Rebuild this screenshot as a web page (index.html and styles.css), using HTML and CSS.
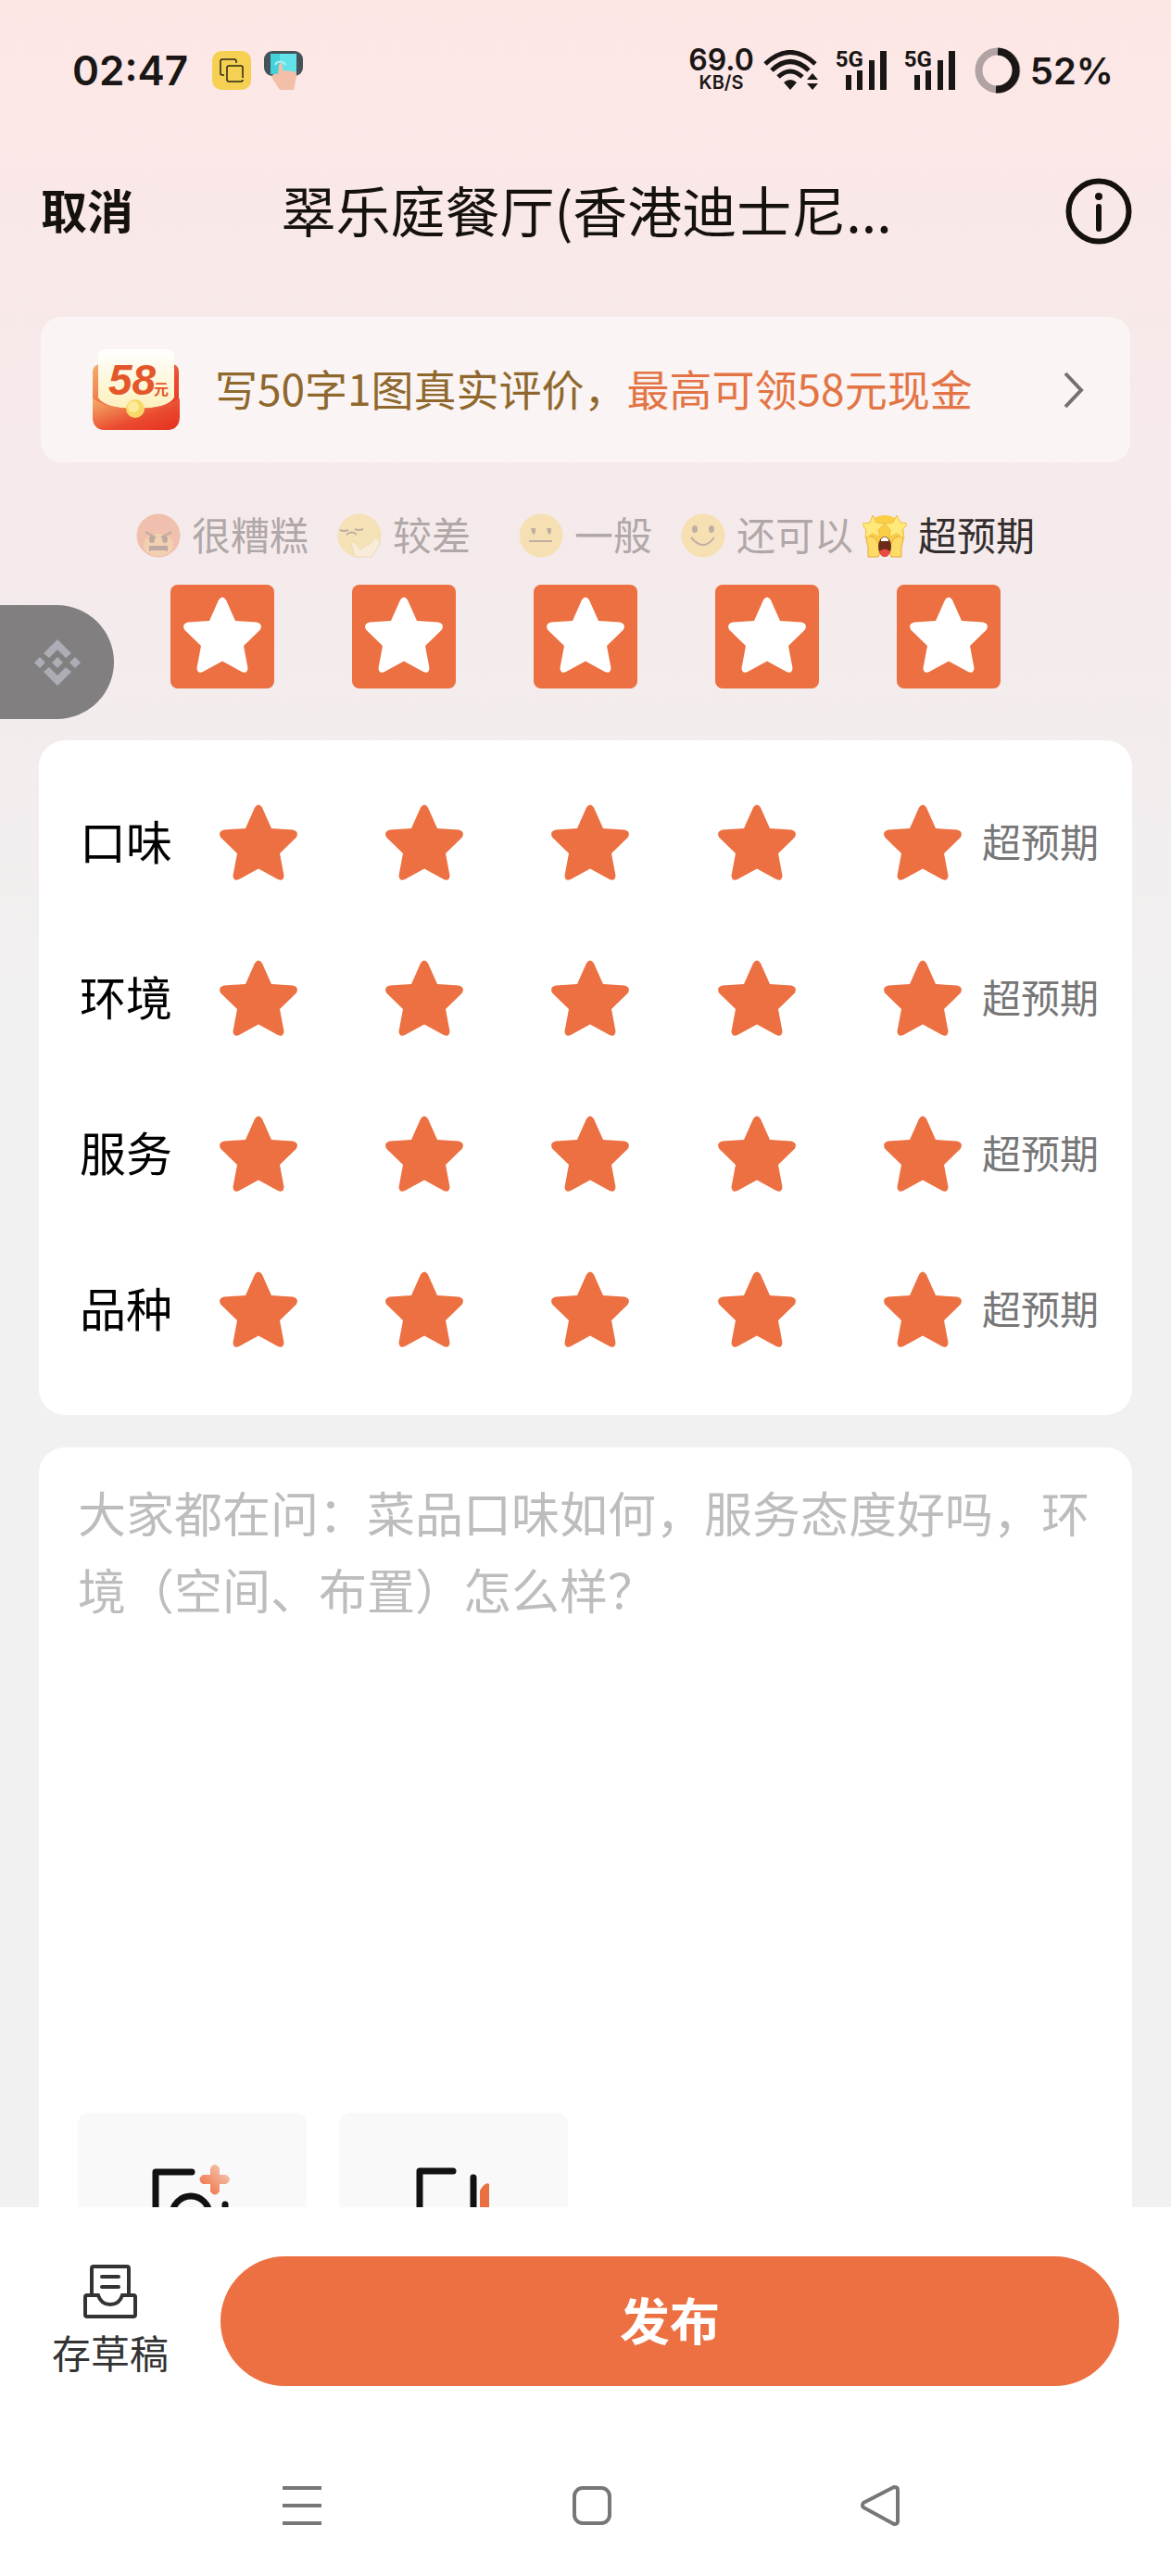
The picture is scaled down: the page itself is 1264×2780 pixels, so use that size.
FILE: index.html
```html
<!DOCTYPE html>
<html lang="zh-CN">
<head>
    <meta charset="UTF-8">
    <meta name="viewport" content="width=device-width, initial-scale=1.0">
    <title>写评价</title>
    <link rel="stylesheet" href="styles.css">
</head>
<body>
    <!-- Shared star shape -->
    <svg class="defs" aria-hidden="true">
        <symbol id="star" viewBox="0 0 84 82">
            <path d="M38 3.500Q42-2.500 46 3.500L56 26L79 27.500Q86 29 83 35.500L65 53L69.500 77Q69 83.500 63 81L42 69.500L21 81Q15 83.500 14.500 77L19 53L1 35.500Q-2 29 5 27.500L28 26Z"/>
        </symbol>
    </svg>

    <div class="status-bar">
        <div class="status-left">
            <span class="clock">02:47</span>
            <svg class="status-app" viewBox="0 0 42 42">
                <rect width="42" height="42" rx="10" fill="#f5d052"/>
                <g fill="none" stroke="#2a2412" stroke-width="1.500">
                    <path d="M13 26h-2q-2 0-2-2V11q0-2 2-2h13q2 0 2 2v2"/>
                    <path d="M33 29v-11q0-2-2-2H18q-2 0-2 2v13q0 2 2 2h13q2 0 2-2"/>
                </g>
            </svg>
            <svg class="status-app" viewBox="0 0 42 42">
                <rect width="42" height="27" rx="9" fill="#455257"/>
                <path d="M7 3h28v22H7z" fill="#62e3e9"/>
                <path d="M7 3h10v22H7z" fill="#45d0dc"/>
                <path d="M12 15a6 6 0 0 1 11 0" fill="none" stroke="#a5f4f4" stroke-width="2"/>
                <path d="M16 15q2-5 4 0v6l12 1q4 1 3 6l-3 14H17L9 30q-2-6 6-5z" fill="#f4bfa8"/>
            </svg>
        </div>
        <div class="status-right">
            <div class="net-speed">
                <span class="speed-value">69.0</span>
                <span class="speed-unit">KB/S</span>
            </div>
            <svg class="wifi" viewBox="0 0 60 44">
                <g fill="none" stroke="#191615" stroke-width="5">
                    <path d="M2 15Q29-10 56 15"/>
                    <path d="M9 22Q29 3 49 22"/>
                    <path d="M16 29Q29 17 42 29"/>
                </g>
                <path d="M22 35q7-6 14 0l-7 8z" fill="#191615"/>
                <path d="M47 32l6-7 6 7zM47 36h12l-6 7z" fill="#191615"/>
            </svg>
            <div class="signal">
                <span>5G</span>
                <svg viewBox="0 0 46 42"><path d="M1 26h6v16H1zM13 21h6v21h-6zM26 10h6v32h-6zM38 0h7v42h-7z" fill="#191615"/></svg>
            </div>
            <div class="signal">
                <span>5G</span>
                <svg viewBox="0 0 46 42"><path d="M1 26h6v16H1zM13 21h6v21h-6zM26 10h6v32h-6zM38 0h7v42h-7z" fill="#191615"/></svg>
            </div>
            <svg class="battery-ring" viewBox="0 0 50 50">
                <circle cx="25" cy="25" r="20.500" fill="none" stroke="#b1a3a3" stroke-width="8"/>
                <path d="M25 4.500a20.500 20.500 0 1 1-2 41" fill="none" stroke="#191615" stroke-width="8"/>
            </svg>
            <span class="battery">52%</span>
        </div>
    </div>

    <header class="title-bar">
        <button type="button" class="cancel">取消</button>
        <h1>翠乐庭餐厅(香港迪士尼...</h1>
        <button type="button" class="info" aria-label="说明">
            <svg viewBox="0 0 72 72">
                <circle cx="36" cy="36" r="32.500" fill="none" stroke="#14110f" stroke-width="6"/>
                <circle cx="36" cy="20" r="4" fill="#14110f"/>
                <path d="M36 31v24" stroke="#14110f" stroke-width="6" stroke-linecap="round"/>
            </svg>
        </button>
    </header>

    <main>
        <a class="promo" href="#">
            <svg class="packet" viewBox="0 0 94 90">
                <defs>
                    <linearGradient id="packetBody" x1="0" y1="0" x2="1" y2="1">
                        <stop offset="0" stop-color="#f5b06a"/>
                        <stop offset="0.600" stop-color="#ea4a30"/>
                        <stop offset="1" stop-color="#e6301f"/>
                    </linearGradient>
                    <linearGradient id="packetCard" x1="0" y1="0" x2="0" y2="1">
                        <stop offset="0" stop-color="#ffffff"/>
                        <stop offset="1" stop-color="#fdf0bd"/>
                    </linearGradient>
                </defs>
                <path d="M0 25q0-6 7-8h80q6 2 6 8v48q0 15-14 15H14Q0 88 0 73z" fill="url(#packetBody)"/>
                <path d="M6 9q0-8 8-8h66q8 0 8 8v44q-7 12-41 12T6 53z" fill="url(#packetCard)"/>
                <path d="M0 54q15 11 46 11t48-11v19q0 15-14 15H14Q0 88 0 73z" fill="url(#packetBody)"/>
                <circle cx="46" cy="65" r="10" fill="#f9d867"/>
                <circle cx="44" cy="63" r="6" fill="#fceb9a"/>
                <text x="17" y="50" class="packet-num">58</text>
                <text x="66" y="50" class="packet-unit">元</text>
            </svg>
            <span class="promo-text">写50字1图真实评价，<em>最高可领58元现金</em></span>
            <svg class="chevron" viewBox="0 0 22 40">
                <path d="M2 2l17 18L2 38" fill="none" stroke="#77706f" stroke-width="4"/>
            </svg>
        </a>

        <section class="overall">
            <div class="mood faded">
                <svg class="emoji" viewBox="0 0 48 48">
                    <circle cx="24" cy="24" r="23.500" fill="#e8713e"/>
                    <ellipse cx="24" cy="34" rx="16" ry="12" fill="#efa343"/>
                    <path d="M10 20l11 6M38 20l-11 6" stroke="#6b3a20" stroke-width="2"/>
                    <ellipse cx="17" cy="28" rx="3" ry="4" fill="#5a3020"/>
                    <ellipse cx="31" cy="28" rx="3" ry="4" fill="#5a3020"/>
                    <path d="M14 35h20v6l-3-1H17l-3 1z" fill="#5a3020"/>
                </svg>
                <span>很糟糕</span>
            </div>
            <div class="mood faded">
                <svg class="emoji" viewBox="0 0 48 48">
                    <circle cx="24" cy="24" r="23.500" fill="#f7d257"/>
                    <path d="M3 18q4 2 9 0M19 17q4 2 9 0M10 23q6-5 11 0" fill="none" stroke="#5a4520" stroke-width="2"/>
                    <path d="M15 32q3-3 6 2l4 5 11-7 4-5q6-1 6 6L37 47H19z" fill="#fdeeb8" stroke="#eab646"/>
                </svg>
                <span>较差</span>
            </div>
            <div class="mood faded">
                <svg class="emoji" viewBox="0 0 48 48">
                    <circle cx="24" cy="24" r="23.500" fill="#f8cf4c"/>
                    <path d="M13 16h5v4q-2 6-4 0zM30 16h5v4q-2 6-4 0z" fill="#5a4520"/>
                    <path d="M11 30h25" stroke="#5a4520" stroke-width="2"/>
                </svg>
                <span>一般</span>
            </div>
            <div class="mood faded">
                <svg class="emoji" viewBox="0 0 48 48">
                    <circle cx="24" cy="24" r="23.500" fill="#f8cf4c"/>
                    <ellipse cx="15" cy="17" rx="3" ry="4" fill="#5a4520"/>
                    <ellipse cx="33" cy="17" rx="3" ry="4" fill="#5a4520"/>
                    <path d="M11 26q13 16 25 0" fill="none" stroke="#5a4520" stroke-width="2"/>
                </svg>
                <span>还可以</span>
            </div>
            <div class="mood">
                <svg class="emoji" viewBox="0 0 48 48">
                    <circle cx="24" cy="23" r="21" fill="#fbcf45"/>
                    <path d="M5 24q-2 6 1 12v11h11q3-5 0-15l-4-6zM43 24q2 6-1 12v11H31q-3-5 0-15l4-6z" fill="#fcdb66" stroke="#eaa93a"/>
                    <path d="M11 2l4 8 9 1-7 7 2 8-8-4-8 5 1-9-5-7 9-1zM37 2l4 8 8 1-6 7 2 9-8-5-8 4 1-8-6-7 9-1z" fill="#ffe978" stroke="#f2bb45"/>
                    <ellipse cx="24" cy="36" rx="7" ry="11" fill="#6b2c19"/>
                    <path d="M18 41q6-5 12 0-2 6-6 6t-6-6z" fill="#e94a43"/>
                    <path d="M20 28q4-5 8 0v2h-8z" fill="#ffffff"/>
                </svg>
                <span>超预期</span>
            </div>
            <button type="button" class="big-star" aria-label="1星"><svg><use href="#star"/></svg></button>
            <button type="button" class="big-star" aria-label="2星"><svg><use href="#star"/></svg></button>
            <button type="button" class="big-star" aria-label="3星"><svg><use href="#star"/></svg></button>
            <button type="button" class="big-star" aria-label="4星"><svg><use href="#star"/></svg></button>
            <button type="button" class="big-star" aria-label="5星"><svg><use href="#star"/></svg></button>
        </section>

        <section class="card ratings" id="ratings"></section>

        <section class="card review">
            <textarea aria-label="评价内容" placeholder="大家都在问：菜品口味如何，服务态度好吗，环境（空间、布置）怎么样？"></textarea>
            <div class="uploads">
                <button type="button" class="upload" aria-label="添加图片">
                    <svg viewBox="0 0 88 80">
                        <defs>
                            <linearGradient id="plusFill" x1="1" y1="0" x2="0" y2="1">
                                <stop offset="0.200" stop-color="#f5bea6"/>
                                <stop offset="1" stop-color="#ec6534"/>
                            </linearGradient>
                        </defs>
                        <g fill="none" stroke="#111111" stroke-width="7" stroke-linecap="round" stroke-linejoin="round">
                            <path d="M43 9H4v62h75V44"/>
                            <circle cx="42" cy="55" r="20"/>
                        </g>
                        <path d="M63 12V5q5-8 10 0v7h7q8 5 0 10h-7v8q-5 7-10 0v-8h-8q-7-5 0-10z" fill="url(#plusFill)"/>
                    </svg>
                </button>
                <button type="button" class="upload" aria-label="添加视频">
                    <svg viewBox="0 0 88 80">
                        <g fill="none" stroke="#111111" stroke-width="7" stroke-linecap="round" stroke-linejoin="round">
                            <path d="M43 8H7v64h58V15"/>
                        </g>
                        <path d="M72 29q6-10 10-7v54q-10-4-10-10z" fill="#eb7041"/>
                    </svg>
                </button>
            </div>
        </section>
    </main>

    <button type="button" class="float-ball" aria-label="悬浮窗">
        <svg viewBox="0 0 50 50" fill="#adadb5">
            <path d="M25 0l15 15-6 5-9-9-9 9-6-5zM25 50l15-15-6-5-9 9-9-9-6 5zM25 19l6 6-6 6-6-6zM6 19l6 6-6 6-6-6zM44 19l6 6-6 6-6-6z"/>
        </svg>
    </button>

    <footer>
        <div class="actions">
            <button type="button" class="draft">
                <svg viewBox="0 0 58 58" fill="none" stroke="#333333" stroke-width="4">
                    <path d="M9 33V4q0-2 2-2h36q2 0 2 2v29"/>
                    <path d="M20 13h18M20 24h18" stroke-linecap="round"/>
                    <path d="M4 33h12q3 10 13 10t13-10h12q2 0 2 2v19q0 2-2 2H4q-2 0-2-2V35q0-2 2-2z"/>
                </svg>
                <span>存草稿</span>
            </button>
            <button type="button" class="publish">发布</button>
        </div>
        <nav class="system-nav">
            <button type="button" aria-label="最近任务">
                <svg viewBox="0 0 44 44"><path d="M1 3h42M1 22h42M1 41h42"/></svg>
            </button>
            <button type="button" aria-label="主页">
                <svg viewBox="0 0 44 44"><rect x="3" y="3" width="38" height="38" rx="9"/></svg>
            </button>
            <button type="button" aria-label="返回">
                <svg viewBox="0 0 44 44"><path d="M3 19L36 2q4 0 4 3v34q0 3-4 3L3 24q-2-2 0-5z"/></svg>
            </button>
        </nav>
    </footer>

    <script src="script.js"></script>
</body>
</html>
```

FILE: styles.css
```css
* {
    box-sizing: border-box;
}

body {
    margin: 0;
    height: 100vh;
    display: flex;
    flex-direction: column;
    overflow: hidden;
    font-family: 'Noto Sans CJK SC', sans-serif;
    color: #14110f;
    background: linear-gradient(#fde7e5 0, #fae8e8 200px, #f4ebec 680px, #f1f1f1 1140px);
}

button {
    padding: 0;
    border: none;
    background: none;
    color: inherit;
    font-family: inherit;
    cursor: pointer;
}

svg {
    display: block;
}

.defs {
    position: absolute;
    width: 0;
    height: 0;
}

/* Phone status bar */
.status-bar {
    flex: none;
    display: flex;
    justify-content: space-between;
    align-items: center;
    height: 152px;
    padding: 0 62px 0 78px;
    font-family: Inter, sans-serif;
    font-weight: 600;
    color: #191615;
}

.status-left,
.status-right {
    display: flex;
    align-items: center;
}

.status-left {
    gap: 14px;
}

.clock {
    margin-right: 12px;
    font-size: 44px;
}

.status-app {
    width: 42px;
    height: 42px;
}

.status-right {
    gap: 10px;
}

.net-speed {
    display: flex;
    flex-direction: column;
    align-items: center;
}

.speed-value {
    font-size: 32px;
    line-height: 26px;
}

.speed-unit {
    font-size: 20px;
    line-height: 22px;
}

.wifi {
    width: 60px;
    height: 44px;
}

.signal {
    position: relative;
    padding-left: 10px;
    margin-left: 8px;
}

.signal span {
    position: absolute;
    left: 0;
    top: 0;
    font-family: Roboto, sans-serif;
    font-size: 24px;
    font-weight: 700;
    line-height: 18px;
}

.signal svg {
    width: 46px;
    height: 42px;
}

.battery-ring {
    width: 50px;
    height: 50px;
    margin-left: 10px;
}

.battery {
    font-size: 40px;
}

/* Title bar */
.title-bar {
    flex: none;
    display: grid;
    grid-template-columns: 1fr auto 1fr;
    align-items: center;
    height: 152px;
    padding: 0 42px 0 44px;
}

.title-bar h1 {
    margin: 0;
    font-size: 59px;
    font-weight: 400;
}

.cancel {
    justify-self: start;
    font-size: 50px;
    font-weight: 700;
}

.info {
    justify-self: end;
}

.info svg {
    width: 72px;
    height: 72px;
}

/* Chinese glyphs sit low in their line box, lift them to the row's middle */
.title-bar h1,
.cancel,
.promo-text,
.mood span,
.rating-name,
.rating-result,
.publish {
    padding-bottom: 6px;
}

main {
    flex: 1;
    min-height: 0;
    overflow: hidden;
    padding: 38px 42px 0;
}

/* Cash reward banner */
.promo {
    display: flex;
    align-items: center;
    height: 157px;
    margin: 0 2px;
    padding: 0 50px 0 56px;
    border-radius: 22px;
    background-color: #fbf4f4;
    color: #8f682d;
    font-size: 46px;
    text-decoration: none;
}

.promo em {
    color: #e37445;
    font-style: normal;
}

.promo-text {
    flex: 1;
    margin-left: 38px;
}

.packet {
    width: 94px;
    height: 90px;
}

.packet-num {
    font: italic 700 46px 'Liberation Sans', sans-serif;
    fill: #e4572b;
}

.packet-unit {
    font-size: 16px;
    font-weight: 700;
    fill: #e4572b;
}

.chevron {
    width: 22px;
    height: 40px;
}

/* Overall score */
.overall {
    display: grid;
    grid-template-columns: repeat(5, 1fr);
    justify-items: center;
    row-gap: 22px;
    margin: 48px 100px 56px;
}

.mood {
    display: flex;
    align-items: center;
    gap: 12px;
    height: 62px;
    color: #332e2e;
    font-size: 42px;
    white-space: nowrap;
}

.faded {
    opacity: 0.35;
}

.emoji {
    width: 48px;
    height: 48px;
}

.big-star {
    display: grid;
    place-items: center;
    width: 112px;
    height: 112px;
    padding-bottom: 4px;
    border-radius: 8px;
    background-color: #ec7041;
    fill: #ffffff;
}

.big-star svg,
.star svg {
    width: 84px;
    height: 82px;
}

.card {
    border-radius: 28px;
    background-color: #ffffff;
}

/* Detailed scores */
.ratings {
    margin-bottom: 35px;
    padding: 26px 36px 30px 44px;
}

.rating-row {
    display: flex;
    align-items: center;
    height: 168px;
}

.rating-name {
    width: 151px;
    font-size: 50px;
    color: #000000;
}

.stars {
    flex: 1;
    display: flex;
    justify-content: space-between;
}

.star {
    fill: #ec7041;
}

.rating-result {
    margin-left: 22px;
    font-size: 42px;
    color: #777777;
}

/* Review text and uploads */
.review {
    padding: 28px 42px;
}

.review textarea {
    display: block;
    width: 100%;
    height: 650px;
    padding: 0;
    border: none;
    outline: none;
    resize: none;
    background: none;
    font-family: inherit;
    font-size: 52px;
    line-height: 83px;
}

.review textarea::placeholder {
    color: #bdbdbd;
}

.uploads {
    display: flex;
    gap: 35px;
    margin-top: 40px;
}

.upload {
    display: grid;
    place-items: center;
    width: 247px;
    height: 190px;
    border-radius: 12px;
    background-color: #f9f9f9;
}

.upload svg {
    width: 88px;
    height: 80px;
}

/* Floating ball over the page edge */
.float-ball {
    position: absolute;
    left: 0;
    top: 653px;
    display: grid;
    place-items: center;
    width: 123px;
    height: 123px;
    border-radius: 0 62px 62px 0;
    background-color: #827f80;
}

.float-ball svg {
    width: 50px;
    height: 50px;
}

footer {
    flex: none;
    background-color: #ffffff;
}

.actions {
    display: flex;
    align-items: center;
    gap: 56px;
    padding: 53px 56px;
}

.draft {
    display: flex;
    flex-direction: column;
    align-items: center;
    gap: 8px;
    color: #333333;
    font-size: 42px;
    line-height: 56px;
}

.draft svg {
    width: 58px;
    height: 58px;
}

.publish {
    flex: 1;
    height: 140px;
    border-radius: 70px;
    background-color: #ec7041;
    color: #ffffff;
    font-size: 54px;
    font-weight: 700;
}

.system-nav {
    display: flex;
    justify-content: space-between;
    padding: 54px 291px 54px 304px;
}

.system-nav svg {
    width: 44px;
    height: 44px;
    fill: none;
    stroke: #777777;
    stroke-width: 4;
}
```

FILE: script.js
```js
const ratings = document.getElementById('ratings');
const names = ['口味', '环境', '服务', '品种'];

// Build one row of five stars for each rating
names.forEach(name => {
    const row = document.createElement('div');
    row.classList.add('rating-row');
    let stars = '';
    for (let i = 1; i <= 5; i++) {
        stars += `<button type="button" class="star" aria-label="${name}${i}星"><svg><use href="#star"/></svg></button>`;
    }
    row.innerHTML = `
        <span class="rating-name">${name}</span>
        <div class="stars">${stars}</div>
        <span class="rating-result">超预期</span>
    `;
    ratings.appendChild(row);
});
```
